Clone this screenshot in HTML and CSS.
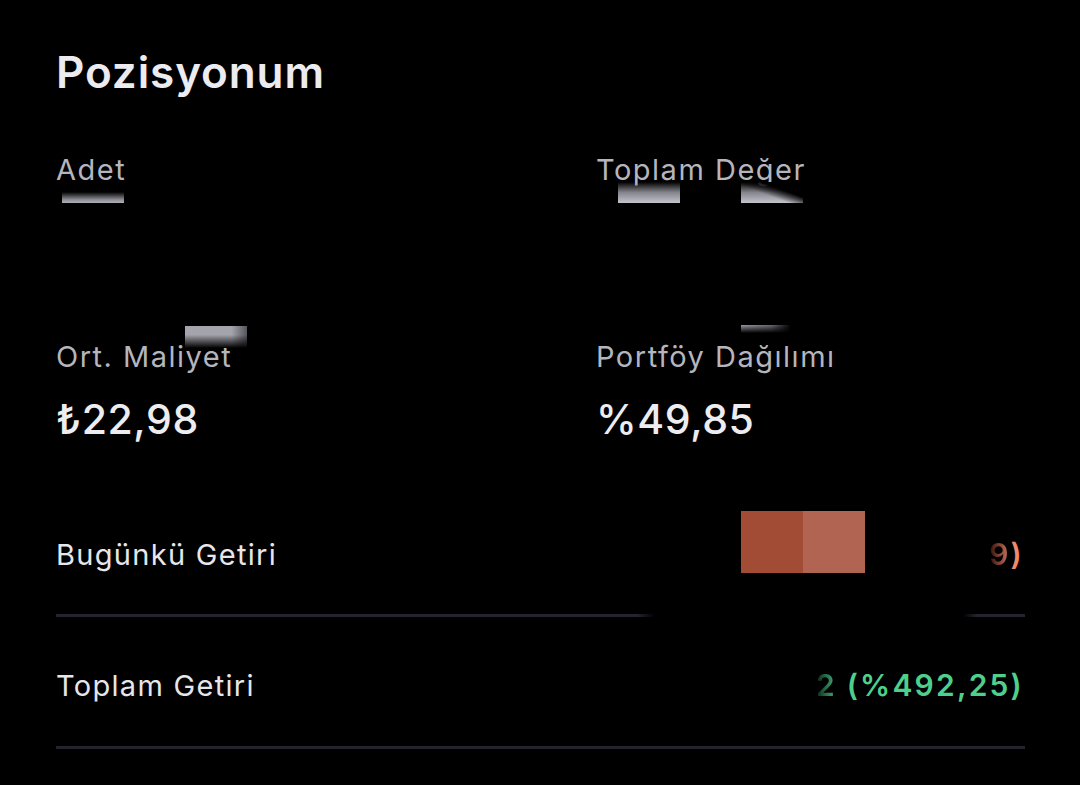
FILE: index.html
```html
<!DOCTYPE html>
<html lang="tr">
<head>
<meta charset="utf-8">
<title>Pozisyonum</title>
<link rel="stylesheet" href="styles.css">
</head>
<body>
<main class="panel">
  <h1 class="title">Pozisyonum</h1>
  <section class="stats">
    <div class="stat">
      <div class="stat-label">Adet</div>
      <div class="stat-value"></div>
    </div>
    <div class="stat">
      <div class="stat-label">Toplam Değer</div>
      <div class="stat-value"></div>
    </div>
    <div class="stat">
      <div class="stat-label">Ort. Maliyet</div>
      <div class="stat-value">₺22,98</div>
    </div>
    <div class="stat">
      <div class="stat-label">Portföy Dağılımı</div>
      <div class="stat-value">%49,85</div>
    </div>
  </section>
  <section class="returns">
    <div class="return-row row-today">
      <span class="return-label">Bugünkü Getiri</span>
      <span class="return-value negative"><span class="fade-neg">9</span>)</span>
    </div>
    <div class="return-row row-total">
      <span class="return-label">Toplam Getiri</span>
      <span class="return-value positive"><span class="fade-pos">2</span> (%492,25)</span>
    </div>
  </section>

  <div class="mask mask-adet"></div>
  <div class="mask mask-total-a"></div>
  <div class="mask mask-total-b"></div>
  <div class="mask mask-cost"></div>
  <div class="mask mask-share"></div>
  <div class="pixel pixel-a"></div>
  <div class="pixel pixel-b"></div>
</main>
</body>
</html>
```

FILE: styles.css
```css
html, body {
  margin: 0;
  padding: 0;
  background: #000;
}

body {
  font-family: Inter, "Noto Sans", "DejaVu Sans", sans-serif;
  color: #e9e9ee;
  width: 1080px;
  height: 785px;
  overflow: hidden;
}

.panel {
  position: relative;
  padding: 47px 55px 0 56px;
}

.title {
  margin: 0;
  font-size: 44px;
  line-height: 50px;
  font-weight: 600;
  color: #ebebf0;
  letter-spacing: 0.9px;
}

.stats {
  margin-top: 56px;
  display: grid;
  grid-template-columns: 540px 1fr;
  row-gap: 84px;
}

.stat-label {
  font-size: 29px;
  line-height: 34px;
  font-weight: 400;
  color: #b5b5bd;
  letter-spacing: 1.5px;
}

.stat-value {
  margin-top: 21px;
  height: 48px;
  font-size: 41px;
  line-height: 48px;
  font-weight: 500;
  color: #ececf1;
  letter-spacing: 0.6px;
}

.returns {
  margin-top: 41px;
}

.return-row {
  display: flex;
  justify-content: space-between;
  align-items: baseline;
  font-size: 29px;
  line-height: 34px;
  position: relative;
}

.return-row::after {
  content: "";
  position: absolute;
  left: 0;
  right: 0;
  bottom: 0;
  height: 3px;
  background: #24242c;
}

.row-today {
  padding: 53px 1px 45px 0;
}

.row-total {
  padding: 51px 1px 46px 0;
}

.row-today::after {
  background: linear-gradient(90deg,
    #24242c 0%, #24242c 60%, rgba(36,36,44,0) 61.8%,
    rgba(36,36,44,0) 93.6%, #24242c 95%, #24242c 100%);
}

.return-label {
  color: #e6e6eb;
  font-weight: 400;
  letter-spacing: 1.3px;
}

.return-value {
  font-weight: 600;
  font-size: 30px;
  letter-spacing: 2.2px;
}

.negative {
  color: #f08a6c;
}

.positive {
  color: #4ed08c;
}

.fade-neg {
  background: linear-gradient(90deg, #2a0e08 0%, #7a3a2c 40%, #d98068 100%);
  -webkit-background-clip: text;
  background-clip: text;
  color: transparent;
}

.fade-pos {
  background: linear-gradient(90deg, #0a2216 0%, #256a47 45%, #48b57c 100%);
  -webkit-background-clip: text;
  background-clip: text;
  color: transparent;
}

/* redaction overlays */
.mask {
  position: absolute;
}

.mask-adet {
  left: 62px;
  top: 192px;
  width: 62px;
  height: 11px;
  background: linear-gradient(180deg, rgba(160,160,168,0) 0%, #8e8e96 70%, #b0b0b8 100%);
}

.mask-total-a {
  left: 618px;
  top: 182px;
  width: 62px;
  height: 21px;
  background: linear-gradient(180deg, rgba(190,190,198,0) 0%, #85858d 50%, #c4c4cc 100%);
}

.mask-total-b {
  left: 741px;
  top: 182px;
  width: 62px;
  height: 21px;
  background:
    linear-gradient(200deg, #000 0%, #000 35%, rgba(0,0,0,0) 60%),
    linear-gradient(180deg, rgba(190,190,198,0) 0%, #85858d 50%, #c4c4cc 100%);
}

.mask-cost {
  left: 185px;
  top: 326px;
  width: 62px;
  height: 22px;
  background:
    linear-gradient(180deg, rgba(0,0,0,0) 0%, rgba(0,0,0,0) 40%, #000 100%),
    linear-gradient(90deg, #a4a4ac 0%, #a4a4ac 75%, #55555c 100%);
}

.mask-share {
  left: 741px;
  top: 325px;
  width: 50px;
  height: 8px;
  background:
    linear-gradient(180deg, rgba(0,0,0,0) 0%, #000 100%),
    linear-gradient(90deg, #9a9aa2 0%, #6a6a72 60%, rgba(0,0,0,0) 100%);
}

.pixel {
  position: absolute;
  top: 511px;
  width: 62px;
  height: 62px;
}

.pixel-a {
  left: 741px;
  background: #a24b35;
}

.pixel-b {
  left: 803px;
  background: #b26452;
}
```
